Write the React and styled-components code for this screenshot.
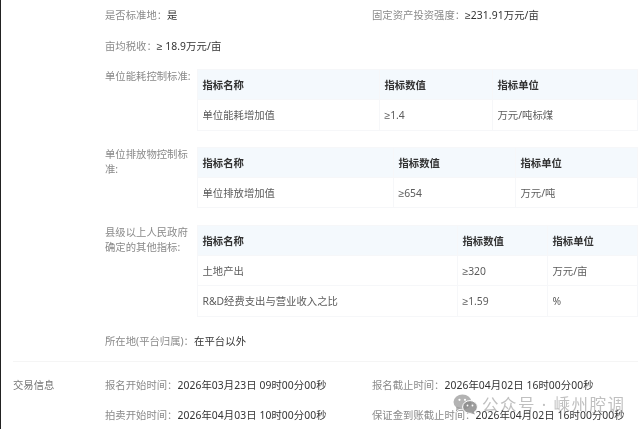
import styled, { createGlobalStyle } from 'styled-components'

const GlobalStyle = createGlobalStyle`
    html, body {
        margin: 0;
        padding: 0;
        background: #fff;
        overflow: hidden;
    }
    body {
        font-family: "Noto Sans", "Liberation Sans", "Noto Sans CJK SC", sans-serif;
        font-size: 10.35px;
        color: #333;
    }
`

const Page = styled.div`
    position: relative;
    width: 640px;
    height: 429px;
    box-sizing: border-box;
    border-left: 1px solid #222;
    padding: 7px 2px 0 12px;
    overflow: hidden;
    filter: blur(0.35px);
`

const Section = styled.div`
    display: flex;
`

const SectionTitle = styled.div`
    width: 92px;
    flex-shrink: 0;
    color: #777;
    line-height: 16px;
`

const SectionBody = styled.div`
    flex: 1;
    display: flex;
    flex-direction: column;
    gap: ${props => props.$gap || 15}px;
`

const Pair = styled.div`
    display: grid;
    grid-template-columns: 267px 1fr;
`

const Field = styled.div`
    line-height: 16px;
    white-space: nowrap;
    margin-top: ${props => props.$top || 0}px;
`

const Label = styled.span`
    color: #8a8a8a;
`

const Value = styled.span`
    color: #333;
    letter-spacing: 0.08px;
`

const TableRow = styled.div`
    display: flex;
    margin-top: ${props => props.$top || 0}px;
`

const TableLabel = styled.div`
    width: 92px;
    flex-shrink: 0;
    color: #8a8a8a;
    line-height: 15px;
`

const Table = styled.div`
    flex: 1;
    display: grid;
    grid-template-columns: ${props => props.$columns};
    border: 1px solid #f6f7f9;
    border-bottom: none;
    border-right: none;
`

const Cell = styled.div`
    height: 30.3px;
    box-sizing: border-box;
    display: flex;
    align-items: center;
    padding-left: 4.5px;
    border-right: 1px solid #f6f7f9;
    border-bottom: 1px solid #f6f7f9;
    color: #5c5c5c;
    white-space: nowrap;
`

const HeadCell = styled(Cell)`
    background: #f4f9fd;
    color: #333;
    font-weight: 700;
`

const Divider = styled.div`
    height: 1px;
    background: #f5f5f5;
    margin: 12px 0 15px;
`

const Watermark = styled.div`
    position: absolute;
    left: 452px;
    top: 392px;
    display: flex;
    align-items: center;
    gap: 4px;
    color: rgba(130, 130, 130, 0.5);
    font-size: 16.5px;
    letter-spacing: 1.5px;
    white-space: nowrap;
`

const WechatIcon = () => (
    <svg width="25" height="21" viewBox="0 0 25 21">
        <ellipse cx="9.5" cy="8" rx="9" ry="7.6" fill="#9a9a9a" fillOpacity="0.75" />
        <path d="M3.5 12.5 L3 17 L8 14 Z" fill="#9a9a9a" fillOpacity="0.75" />
        <ellipse cx="17" cy="13" rx="7.4" ry="6.4" fill="#8c8c8c" fillOpacity="0.85" stroke="#fff" strokeWidth="1" />
        <path d="M20.5 17.5 L22 20.5 L17.5 19 Z" fill="#8c8c8c" fillOpacity="0.85" />
        <circle cx="6.5" cy="5.8" r="1.1" fill="#fff" />
        <circle cx="12" cy="5.8" r="1.1" fill="#fff" />
        <circle cx="14.5" cy="11.5" r="0.9" fill="#fff" />
        <circle cx="19.5" cy="11.5" r="0.9" fill="#fff" />
    </svg>
)

const IndicatorTable = ({ columns, rows }) => (
    <Table $columns={columns}>
        <HeadCell>指标名称</HeadCell>
        <HeadCell>指标数值</HeadCell>
        <HeadCell>指标单位</HeadCell>
        {rows.map(row => row.map(text => <Cell key={text}>{text}</Cell>))}
    </Table>
)

const App = () => {
    return (
        <Page>
            <GlobalStyle />
            <Section>
                <SectionTitle />
                <SectionBody>
                    <Pair>
                        <Field><Label>是否标准地：</Label><Value>是</Value></Field>
                        <Field><Label>固定资产投资强度：</Label><Value>≥231.91万元/亩</Value></Field>
                    </Pair>
                    <Field><Label>亩均税收：</Label><Value>≥ 18.9万元/亩</Value></Field>
                </SectionBody>
            </Section>
            <TableRow $top={15}>
                <SectionTitle />
                <TableLabel>单位能耗控制标准:</TableLabel>
                <IndicatorTable columns="182px 113px 1fr" rows={[['单位能耗增加值', '≥1.4', '万元/吨标煤']]} />
            </TableRow>
            <TableRow $top={16}>
                <SectionTitle />
                <TableLabel>单位排放物控制标准:</TableLabel>
                <IndicatorTable columns="196px 122px 1fr" rows={[['单位排放增加值', '≥654', '万元/吨']]} />
            </TableRow>
            <TableRow $top={16.5}>
                <SectionTitle />
                <TableLabel>县级以上人民政府确定的其他指标:</TableLabel>
                <IndicatorTable
                    columns="260px 90px 1fr"
                    rows={[
                        ['土地产出', '≥320', '万元/亩'],
                        ['R&D经费支出与营业收入之比', '≥1.59', '%'],
                    ]}
                />
            </TableRow>
            <Section>
                <SectionTitle />
                <SectionBody>
                    <Field $top={16}><Label>所在地(平台归属)：</Label><Value>在平台以外</Value></Field>
                </SectionBody>
            </Section>
            <Divider />
            <Section>
                <SectionTitle>交易信息</SectionTitle>
                <SectionBody $gap={14}>
                    <Pair>
                        <Field><Label>报名开始时间：</Label><Value>2026年03月23日 09时00分00秒</Value></Field>
                        <Field><Label>报名截止时间：</Label><Value>2026年04月02日 16时00分00秒</Value></Field>
                    </Pair>
                    <Pair>
                        <Field><Label>拍卖开始时间：</Label><Value>2026年04月03日 10时00分00秒</Value></Field>
                        <Field><Label>保证金到账截止时间：</Label><Value>2026年04月02日 16时00分00秒</Value></Field>
                    </Pair>
                </SectionBody>
            </Section>
            <Watermark>
                <WechatIcon />
                <span>公众号 · 嵊州腔调</span>
            </Watermark>
        </Page>
    )
}

export default App
